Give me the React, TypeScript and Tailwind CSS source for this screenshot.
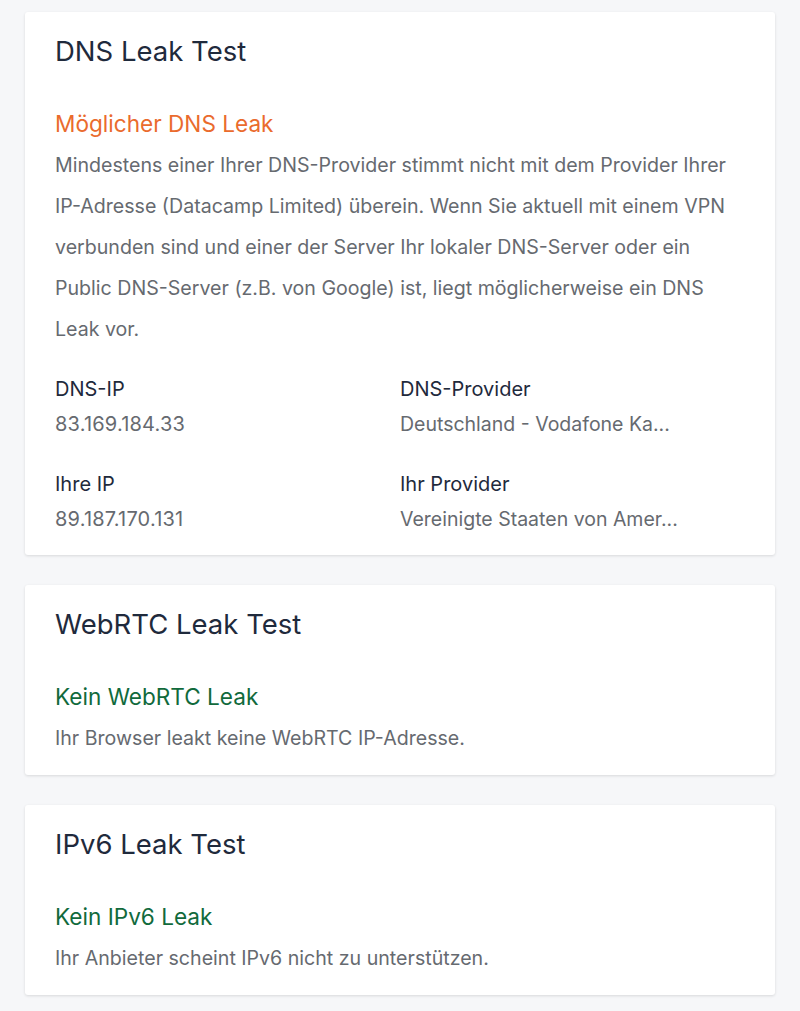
const font = { fontFamily: "Inter, 'Noto Sans', sans-serif" };

type Item = { label: string; value: string; ip?: boolean };

const Card = ({ title, status, tone, children }: { title: string; status: string; tone: "warn" | "ok"; children: React.ReactNode }) => (
  <section className="bg-white rounded-[3px] shadow-[0_1px_3px_rgba(0,0,0,0.12)] px-[30px] pt-[21px] pb-[16px]">
    <h2 className="text-[27.5px] leading-[36px] text-[#1f2a3c] font-normal">{title}</h2>
    <h3 className={`mt-[41px] text-[22.6px] leading-[28px] font-normal ${tone === "warn" ? "text-[#ea6b2d]" : "text-[#116a3c]"}`}>{status}</h3>
    {children}
  </section>
);

const InfoGrid = ({ items }: { items: Item[] }) => (
  <div className="grid grid-cols-2 gap-y-[25px] mt-[22px] mb-[2px]">
    {items.map((it) => (
      <div key={it.label}>
        <p className="text-[20px] leading-[35px] text-[#1f2a3c]">{it.label}</p>
        <p className={`leading-[35px] text-[#666a70] ${it.ip ? "text-[20px] tracking-[0.2px]" : "text-[19.5px]"}`}>{it.value}</p>
      </div>
    ))}
  </div>
);

export default function App() {
  const dns: Item[] = [
    { label: "DNS-IP", value: "83.169.184.33", ip: true },
    { label: "DNS-Provider", value: "Deutschland - Vodafone Ka..." },
    { label: "Ihre IP", value: "89.187.170.131", ip: true },
    { label: "Ihr Provider", value: "Vereinigte Staaten von Amer..." },
  ];

  return (
    <div style={font} className="min-h-screen bg-[#f6f7f9] px-[25px] pt-[12px] pb-[16px] flex flex-col gap-[30px]">
      <Card title="DNS Leak Test" status="Möglicher DNS Leak" tone="warn">
        <p className="mt-[7px] text-[19.6px] leading-[41px] text-[#666a70]">
          Mindestens einer Ihrer DNS-Provider stimmt nicht mit dem Provider Ihrer IP-Adresse (Datacamp Limited) überein. Wenn Sie aktuell mit einem VPN verbunden sind und einer der Server Ihr lokaler DNS-Server oder ein Public DNS-Server (z.B. von Google) ist, liegt möglicherweise ein DNS Leak vor.
        </p>
        <InfoGrid items={dns} />
      </Card>

      <Card title="WebRTC Leak Test" status="Kein WebRTC Leak" tone="ok">
        <p className="mt-[7px] text-[19.6px] leading-[41px] text-[#666a70]">Ihr Browser leakt keine WebRTC IP-Adresse.</p>
      </Card>

      <Card title="IPv6 Leak Test" status="Kein IPv6 Leak" tone="ok">
        <p className="mt-[7px] text-[19.6px] leading-[41px] text-[#666a70]">Ihr Anbieter scheint IPv6 nicht zu unterstützen.</p>
      </Card>
    </div>
  );
}
